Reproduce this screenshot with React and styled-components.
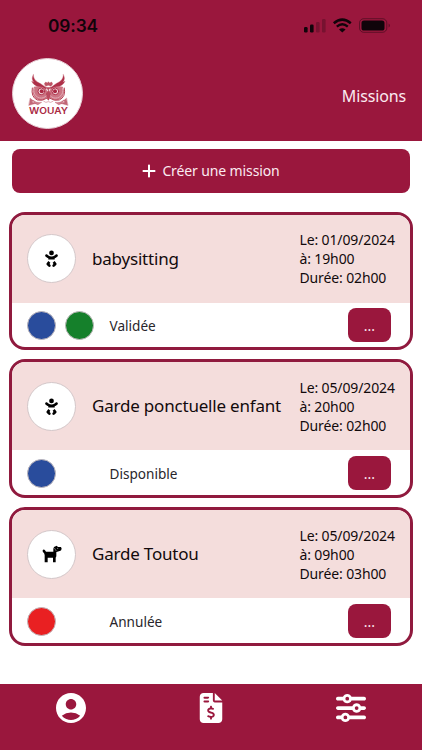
import React from "react";
import styled, { createGlobalStyle } from "styled-components";
import { FaBaby, FaFileInvoiceDollar, FaPlus, FaSliders } from "react-icons/fa6";
import { MdAccountCircle } from "react-icons/md";

const brand = "#9a173d";

const GlobalStyle = createGlobalStyle`
  * { box-sizing: border-box; }
  body { margin: 0; background: #fff; }
  button { font: inherit; border: 0; padding: 0; }
`;

const Screen = styled.div`
  width: 422px;
  height: 750px;
  display: flex;
  flex-direction: column;
  overflow: hidden;
  background: #fff;
  color: #120a0c;
  font-family: "Noto Sans", sans-serif;
`;

const Header = styled.header`
  height: 141px;
  flex: none;
  background: ${brand};
`;

const StatusBar = styled.div`
  height: 51px;
  padding: 0 31px 0 48px;
  display: flex;
  align-items: center;
  justify-content: space-between;
  color: #10040a;
`;

const Clock = styled.span`
  font: 600 17.3px/20px Inter, sans-serif;
  letter-spacing: -0.1px;
`;

const TitleBar = styled.div`
  height: 85px;
  padding: 0 16px 0 12px;
  display: flex;
  align-items: center;
  justify-content: space-between;
`;

const LogoDisc = styled.div`
  width: 71px;
  height: 71px;
  border-radius: 50%;
  background: #fff;
  border: 1px solid #e6cdd4;
  display: grid;
  place-items: center;
`;

const PageTitle = styled.h1`
  margin: 5px 0 0;
  font-size: 16px;
  line-height: 22px;
  letter-spacing: -0.15px;
  font-weight: 400;
  color: #fbeaf0;
`;

const Content = styled.main`
  flex: 1;
  padding: 8px 9px 0;
`;

const CreateButton = styled.button`
  width: 398px;
  height: 43.5px;
  margin: 0 3px;
  padding-right: 1px;
  display: flex;
  align-items: center;
  justify-content: center;
  gap: 5px;
  border-radius: 8px;
  background: ${brand};
  color: #fbeaf0;
  font-size: 14px;
  letter-spacing: -0.12px;
`;

const MissionList = styled.div`
  margin-top: 19px;
  display: flex;
  flex-direction: column;
  gap: 9.2px;
`;

const Card = styled.article`
  width: 404px;
  height: ${(p) => (p.$tall ? 139.4 : 138.6)}px;
  border: 3px solid #901a3e;
  border-radius: 16px;
  overflow: hidden;
  background: #fff;
  display: flex;
  flex-direction: column;
`;

const CardTop = styled.div`
  height: 88px;
  flex: none;
  padding-left: 15px;
  display: grid;
  grid-template-columns: 65px 207.5px 1fr;
  align-items: center;
  background: #f4dddc;
`;

const IconDisc = styled.div`
  width: 49px;
  height: 49px;
  border-radius: 50%;
  border: 1px solid #d3c7c9;
  background: #fff;
  color: #000;
  display: grid;
  place-items: center;
`;

const MissionName = styled.h2`
  margin: 0;
  font-size: 17px;
  line-height: 24px;
  letter-spacing: -0.2px;
  font-weight: 400;
  white-space: nowrap;
`;

const Schedule = styled.div`
  font-size: 14px;
  line-height: 19px;
  letter-spacing: -0.13px;
  white-space: nowrap;
`;

const CardBottom = styled.div`
  flex: 1;
  padding: 1px 19px 0 15px;
  display: grid;
  grid-template-columns: 82.5px 1fr 43px;
  align-items: center;
`;

const Dots = styled.div`
  display: flex;
  gap: 8.5px;
`;

const Dot = styled.span`
  width: 29px;
  height: 29px;
  border-radius: 50%;
  border: 1px solid #bfb8bc;
  background: ${(p) => p.$color};
`;

const Status = styled.span`
  font-size: 13.6px;
  color: #29262b;
`;

const MoreButton = styled.button`
  height: 34px;
  border-radius: 8px;
  background: ${brand};
  color: #fbeaf0;
  font-size: 14px;
`;

const NavBar = styled.nav`
  height: 66.5px;
  flex: none;
  padding-top: 6.5px;
  display: grid;
  grid-template-columns: repeat(3, 140.3px);
  justify-content: center;
  justify-items: center;
  align-items: start;
  background: ${brand};
  color: #fff;
`;

const NavItem = styled.span`
  height: 36px;
  display: flex;
  align-items: center;
`;

const OwlLogo = () => (
  <svg width="42" height="42" viewBox="55 52 126 126">
    <g fill="none" stroke="#b64255" strokeLinecap="round">
      <path d="M74 57C74 69 81 77 96 84L114 97L109 102C96 96 78 94 69 77L76 80C70 73 69 66 74 57ZM164 57C164 69 157 77 142 84L124 97L129 102C142 96 160 94 169 77L162 80C168 73 169 66 164 57Z" fill="#ae3049" strokeWidth="1" />
      <path d="M107 84L111 79L116 82L119 78L123 82L129 79L132 85L127 92L119 89L111 92Z" fill="#bd5364" strokeWidth="1" />
      <path d="M76 93Q98 88 113 101L119 116L125 101Q140 88 162 93Q173 112 156 129Q139 140 125 126L119 135L113 126Q99 140 82 129Q65 112 76 93Z" fill="#cc7483" stroke="none" />
      <circle cx="98" cy="107" r="10" fill="#f7e3e6" stroke="#ae3049" strokeWidth="3" />
      <circle cx="140" cy="107" r="10" fill="#f7e3e6" stroke="#ae3049" strokeWidth="3" />
      <circle cx="99" cy="107" r="6" fill="#a92943" stroke="none" />
      <circle cx="139" cy="107" r="6" fill="#a92943" stroke="none" />
      <path d="M112 95L119 103L126 95M119 104L113 115L119 133L125 115Z" fill="#b94b60" strokeWidth="2" />
      <path d="M71 97Q66 124 86 133Q101 137 114 128M167 97Q172 124 152 133Q137 137 124 128" strokeWidth="3" />
      <path d="M76 99Q73 118 90 126Q103 130 112 121M162 99Q165 118 148 126Q135 130 126 121" stroke="#f3dce0" strokeWidth="1.8" strokeDasharray="3 3" />
      <path d="M65 128L74 136L68 139L82 143L61 149ZM173 128L164 136L170 139L156 143L177 149Z" fill="#c26878" strokeWidth="1" />
      <path d="M73 134Q84 143 99 140L88 147Q79 148 73 134ZM165 134Q154 143 139 140L150 147Q159 148 165 134Z" fill="#ce8190" strokeWidth="1" />
      <path d="M105 137Q112 143 119 138Q126 143 133 137" stroke="#cf8792" strokeWidth="2" />
    </g>
    <text x="61" y="175" fill="#a92943" fontFamily="Inter, sans-serif" fontSize="26" fontWeight="600" textLength="117" lengthAdjust="spacingAndGlyphs">WOUAY</text>
  </svg>
);

const DogIcon = () => (
  <svg width="20" height="18" viewBox="0 0 60 54" fill="currentColor">
    <path d="M2 15Q6 11 9 16L12 20H34V11L36 6L41 4L44 2L48 6H57L59 11Q59 18 51 19L43 21V34L41 38V52H33V38H17V52H8V30L6 24Q1 22 2 15Z" />
    <path d="M37 9L43 18" stroke="#fff" strokeWidth="1.2" />
    <circle cx="47" cy="10" r="1.5" fill="#bbb" />
  </svg>
);

const PhoneStatus = () => (
  <svg width="88" height="16" viewBox="0 0 88 16">
    <g fill="#10040a">
      <rect x="1" y="9" width="3.6" height="5.5" rx="1.2" />
      <rect x="7" y="6.5" width="3.6" height="8" rx="1.2" />
      <rect x="13" y="4" width="3.6" height="10.5" rx="1.2" opacity=".25" />
      <rect x="19" y="1" width="3.6" height="13.5" rx="1.2" opacity=".25" />
      <path d="M36 11.5Q39.3 8.8 42.6 11.5L39.3 14.5Z" />
      <rect x="58.5" y="2.5" width="23" height="10" rx="2.6" />
      <path d="M85.7 5.5Q88 7.5 85.7 9.5Z" opacity=".5" />
    </g>
    <g fill="none" stroke="#10040a">
      <path d="M30.8 5.2Q39.3 -2 47.8 5.2" strokeWidth="2.5" />
      <path d="M33.8 8.7Q39.3 4 44.8 8.7" strokeWidth="2.4" />
      <rect x="56.5" y=".7" width="27.3" height="13.6" rx="4.2" opacity=".42" />
    </g>
  </svg>
);

const missions = [
  { name: "babysitting", Icon: FaBaby, date: "01/09/2024", time: "19h00", duration: "02h00", status: "Validée", colors: ["#294c9c", "#15802b"] },
  { name: "Garde ponctuelle enfant", Icon: FaBaby, date: "05/09/2024", time: "20h00", duration: "02h00", status: "Disponible", colors: ["#294c9c"] },
  { name: "Garde Toutou", Icon: DogIcon, date: "05/09/2024", time: "09h00", duration: "03h00", status: "Annulée", colors: ["#e92022"] },
];

export default function App() {
  return (
    <Screen>
      <GlobalStyle />
      <Header>
        <StatusBar>
          <Clock>09:34</Clock>
          <PhoneStatus />
        </StatusBar>
        <TitleBar>
          <LogoDisc><OwlLogo /></LogoDisc>
          <PageTitle>Missions</PageTitle>
        </TitleBar>
      </Header>
      <Content>
        <CreateButton><FaPlus size={16} color="#fff" />Créer une mission</CreateButton>
        <MissionList>
          {missions.map(({ name, Icon, date, time, duration, status, colors }, index) => (
            <Card key={name} $tall={index === missions.length - 1}>
              <CardTop>
                <IconDisc><Icon size={17} /></IconDisc>
                <MissionName>{name}</MissionName>
                <Schedule>
                  <div>Le: {date}</div>
                  <div>à: {time}</div>
                  <div>Durée: {duration}</div>
                </Schedule>
              </CardTop>
              <CardBottom>
                <Dots>{colors.map((c) => <Dot key={c} $color={c} />)}</Dots>
                <Status>{status}</Status>
                <MoreButton>...</MoreButton>
              </CardBottom>
            </Card>
          ))}
        </MissionList>
      </Content>
      <NavBar>
        <NavItem><MdAccountCircle size={36} /></NavItem>
        <NavItem><FaFileInvoiceDollar size={30} /></NavItem>
        <NavItem><FaSliders size={30} /></NavItem>
      </NavBar>
    </Screen>
  );
}
